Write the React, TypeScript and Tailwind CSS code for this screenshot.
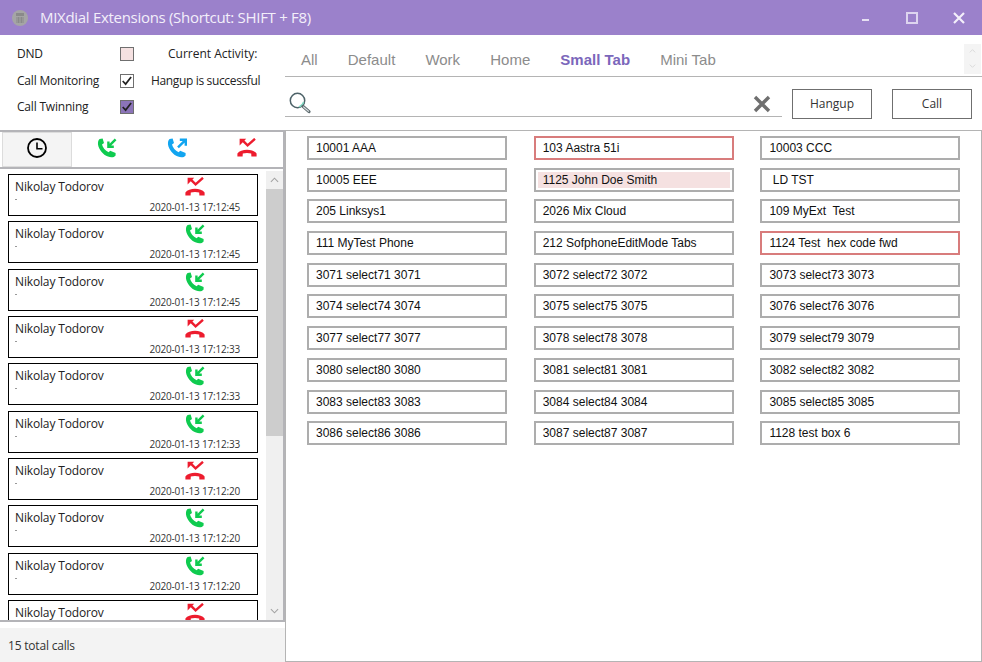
const ui = "font-['Open_Sans',sans-serif]";

const calls = [
  { kind: "missed", time: "2020-01-13 17:12:45" },
  { kind: "in", time: "2020-01-13 17:12:45" },
  { kind: "in", time: "2020-01-13 17:12:45" },
  { kind: "missed", time: "2020-01-13 17:12:33" },
  { kind: "in", time: "2020-01-13 17:12:33" },
  { kind: "in", time: "2020-01-13 17:12:33" },
  { kind: "missed", time: "2020-01-13 17:12:20" },
  { kind: "in", time: "2020-01-13 17:12:20" },
  { kind: "in", time: "2020-01-13 17:12:20" },
  { kind: "missed", time: "2020-01-13 17:12:08" },
];

const extensions = [
  { name: "10001 AAA" },
  { name: "103 Aastra 51i", state: "busy" },
  { name: "10003 CCC" },
  { name: "10005 EEE" },
  { name: "1125 John Doe Smith", state: "ringing" },
  { name: " LD TST" },
  { name: "205 Linksys1" },
  { name: "2026 Mix Cloud" },
  { name: "109 MyExt  Test" },
  { name: "111 MyTest Phone" },
  { name: "212 SofphoneEditMode Tabs" },
  { name: "1124 Test  hex code fwd", state: "busy" },
  { name: "3071 select71 3071" },
  { name: "3072 select72 3072" },
  { name: "3073 select73 3073" },
  { name: "3074 select74 3074" },
  { name: "3075 select75 3075" },
  { name: "3076 select76 3076" },
  { name: "3077 select77 3077" },
  { name: "3078 select78 3078" },
  { name: "3079 select79 3079" },
  { name: "3080 select80 3080" },
  { name: "3081 select81 3081" },
  { name: "3082 select82 3082" },
  { name: "3083 select83 3083" },
  { name: "3084 select84 3084" },
  { name: "3085 select85 3085" },
  { name: "3086 select86 3086" },
  { name: "3087 select87 3087" },
  { name: "1128 test box 6" },
];

const tabs = ["All", "Default", "Work", "Home", "Small Tab", "Mini Tab"];

const IncomingIcon = ({ color = "#0fcb4f", flip = false }: { color?: string; flip?: boolean }) => (
  <svg viewBox="0 0 20 20" className="w-5 h-5">
    <path
      d="M2.6 1 L5.6 0.6 L7 5 L5 6.4 C5.8 9.6 8.2 12.4 11.6 14.2 L13.2 12.8 L18.6 15 L18.6 17.4 C17 19.6 14 19.8 11 18.6 C6 16.6 1.8 11.6 1 6.4 C0.8 4 1.2 2 2.6 1 Z"
      fill={color}
    />
    {flip ? (
      <path d="M11 9.4 L17.6 2.8 M12.8 1.8 H18.8 V7.8" stroke={color} strokeWidth="2.4" fill="none" />
    ) : (
      <path d="M18.6 1.4 L12.6 7.4 M11.4 3.4 V8.8 H16.8" stroke={color} strokeWidth="2.4" fill="none" />
    )}
  </svg>
);

const MissedIcon = () => (
  <svg viewBox="0 0 20 20" className="w-5 h-5">
    <path
      d="M0.4 18.6 L0.4 15.4 C4 10.6 16 10.6 19.6 15.4 L19.6 18.6 L14.4 18.6 L14.2 15.6 C12 14.8 8 14.8 5.8 15.6 L5.6 18.6 Z"
      fill="#ed1c2e"
    />
    <path d="M5.8 2.6 L10.6 7.4 L18 0.8" stroke="#ed1c2e" strokeWidth="2.4" fill="none" />
    <path d="M2.6 0.8 H9.2 L2.6 7.4 Z" fill="#ed1c2e" />
  </svg>
);

const ClockIcon = () => (
  <svg viewBox="0 0 20 20" className="w-5 h-5">
    <circle cx="10" cy="10" r="9" stroke="#000" strokeWidth="1.8" fill="none" />
    <path d="M10 4.5 V10.8 H15.5" stroke="#000" strokeWidth="1.6" fill="none" />
  </svg>
);

const SearchIcon = () => (
  <svg viewBox="0 0 24 24" className="w-6 h-6">
    <circle cx="9.5" cy="9.5" r="7.2" stroke="#4d6268" strokeWidth="1.5" fill="#fff" />
    <path d="M11 15.8 A7 7 0 0 0 15.6 11" stroke="#7fd8c0" strokeWidth="1.4" fill="none" />
    <path d="M15 15.4 L21 20.6" stroke="#5d6a6e" strokeWidth="3.2" strokeLinecap="round" />
    <path d="M15.6 16 L20.6 20.2" stroke="#d6dcdd" strokeWidth="1.2" strokeLinecap="round" />
  </svg>
);

const Check = ({ color }: { color: string }) => (
  <svg viewBox="0 0 14 14" className="w-3 h-3">
    <path d="M2 7 L5.4 10.6 L11.8 2.4" stroke={color} strokeWidth="2" fill="none" />
  </svg>
);

const TitleBar = () => (
  <div className="h-[35px] shrink-0 bg-[#9b81cb] flex items-center text-white">
    <svg viewBox="0 0 16 16" className="w-4 h-4 ml-3">
      <circle cx="8" cy="8" r="8" fill="#a5a5a5" />
      <rect x="4" y="3" width="8" height="3" fill="#8a8a8a" />
      <path d="M4 8h8M4 10h8M4 12h8M6.5 7v6M9.5 7v6" stroke="#8a8a8a" strokeWidth="1" />
    </svg>
    <span className={`${ui} ml-3 text-[15px] text-[#f3effa] tracking-[-0.3px]`}>
      MIXdial Extensions (Shortcut: SHIFT + F8)
    </span>
    <div className="ml-auto flex items-center">
      <div className="w-[7px] h-[2px] bg-[#e6dff3] mr-[37px] mt-[4px]" />
      <div className="w-3 h-3 border-2 border-[#ddd4ef] mr-[35px]" />
      <svg viewBox="0 0 12 12" className="w-3 h-3 mr-[17px]">
        <path d="M1 1 L11 11 M11 1 L1 11" stroke="#f3effa" strokeWidth="2.2" />
      </svg>
    </div>
  </div>
);

const Settings = () => (
  <div className={`${ui} h-[95px] shrink-0 pl-[17px] pt-[6px] text-[12px] tracking-[-0.2px] text-[#222] grid grid-cols-[103px_31px_1fr] auto-rows-[26.5px] items-center content-start`}>
    <span>DND</span>
    <div className="w-[14px] h-[14px] border border-[#6f6f6f] bg-[#f5e1e1]" />
    <span className="pl-[17px] whitespace-nowrap tracking-[0px]">Current Activity:</span>
    <span>Call Monitoring</span>
    <div className="w-[14px] h-[14px] border border-[#6f6f6f] flex items-center justify-center">
      <Check color="#222" />
    </div>
    <span className="whitespace-nowrap tracking-[-0.35px]">Hangup is successful</span>
    <span>Call Twinning</span>
    <div className="w-[14px] h-[14px] border border-[#6f6f6f] bg-[#8b74b8] flex items-center justify-center">
      <Check color="#222" />
    </div>
  </div>
);

const FilterBar = () => (
  <div className="h-[39px] shrink-0 border-y-2 border-[#b4b4b8] flex items-center pl-[2px]">
    <div className="w-[70px] h-[35px] pb-[3px] bg-[#f4f4f4] border border-[#dcdcdc] flex items-center justify-center">
      <ClockIcon />
    </div>
    <div className="w-[70px] pb-[3px] flex justify-center"><IncomingIcon /></div>
    <div className="w-[70px] pb-[3px] flex justify-center"><IncomingIcon color="#12a5f0" flip /></div>
    <div className="w-[70px] pb-[3px] flex justify-center"><MissedIcon /></div>
  </div>
);

const CallCard = ({ kind, time }: { kind: string; time: string }) => (
  <div className="h-[42px] shrink-0 border border-black flex justify-between pl-[6px] pr-[17px]">
    <div className={`${ui} text-[12px] tracking-[-0.15px] text-[#222] leading-[16px] pt-[4px]`}>
      <div>Nikolay Todorov</div>
      <div className="w-[2px] h-[1px] bg-[#999] mt-[4px]" />
    </div>
    <div className="flex flex-col items-center pt-[2px]">
      <div className="h-[24px]">{kind === "in" ? <IncomingIcon /> : <MissedIcon />}</div>
      <div className={`${ui} text-[10px] tracking-[-0.2px] leading-[13px] text-[#333] whitespace-nowrap`}>{time}</div>
    </div>
  </div>
);

const Scrollbar = () => (
  <div className="w-[17px] ml-[8px] bg-[#f0f0f0] flex flex-col shrink-0 self-stretch">
    <div className="h-[18px] flex items-center justify-center">
      <svg viewBox="0 0 10 6" className="w-[9px] h-[6px]"><path d="M1 5 L5 1 L9 5" stroke="#a3a3a3" strokeWidth="1.2" fill="none" /></svg>
    </div>
    <div className="h-[247px] bg-[#cdcdcd]" />
    <div className="mt-auto h-[18px] flex items-center justify-center">
      <svg viewBox="0 0 10 6" className="w-[9px] h-[6px]"><path d="M1 1 L5 5 L9 1" stroke="#a3a3a3" strokeWidth="1.2" fill="none" /></svg>
    </div>
  </div>
);

const LeftPanel = () => (
  <div className="w-[285px] shrink-0 flex flex-col">
    <Settings />
    <div className="flex-1 min-h-0 flex flex-col border-r-2 border-b-2 border-[#b4b4b8]">
      <FilterBar />
      <div className="flex-1 min-h-0 flex pl-[8px] pt-[2px] overflow-hidden">
        <div className="w-[250px] shrink-0 flex flex-col gap-[5.33px] pt-[3px] overflow-hidden">
          {calls.map((call, i) => (
            <CallCard key={i} kind={call.kind} time={call.time} />
          ))}
        </div>
        <Scrollbar />
      </div>
    </div>
    <div className={`${ui} mt-[6px] h-[34px] shrink-0 bg-[#f3f3f3] pl-[8px] pt-[2px] flex items-center text-[12px] tracking-[-0.2px] text-[#333]`}>
      15 total calls
    </div>
  </div>
);

const TabStrip = () => (
  <div className="h-[42px] shrink-0 border-b border-[#b4b4b4] flex items-center pl-[16px] font-['Liberation_Sans',sans-serif] text-[15px] text-[#8c8c8c]">
    <div className="flex gap-[30.1px] pt-[9px]">
      {tabs.map((t) => (
        <span key={t} className={t === "Small Tab" ? "font-bold text-[#7b67bb]" : ""}>{t}</span>
      ))}
    </div>
    <div className="ml-auto mr-[1px] mt-[6px] w-[17px] flex flex-col bg-[#f4f4f4]">
      <div className="h-[15px] flex items-center justify-center">
        <svg viewBox="0 0 10 6" className="w-[7px] h-[4px]"><path d="M1 5 L5 1 L9 5" stroke="#d4d4d4" strokeWidth="1.2" fill="none" /></svg>
      </div>
      <div className="h-[15px] flex items-center justify-center">
        <svg viewBox="0 0 10 6" className="w-[7px] h-[4px]"><path d="M1 1 L5 5 L9 1" stroke="#d4d4d4" strokeWidth="1.2" fill="none" /></svg>
      </div>
    </div>
  </div>
);

const SearchRow = () => (
  <div className="h-[53px] shrink-0 flex items-start">
    <div className="w-[497px] h-[40px] border-b border-[#b4b4b4] flex items-end justify-between pb-[1px] pl-[3px] pr-[11px]">
      <SearchIcon />
      <svg viewBox="0 0 18 18" className="w-[18px] h-[18px] mb-[2px]">
        <path d="M2 2 L16 16 M16 2 L2 16" stroke="#6f6f6f" strokeWidth="3.4" />
      </svg>
    </div>
    <div className={`${ui} flex gap-[20px] ml-[10px] mt-[12px] text-[12px] text-[#333]`}>
      <button className="w-[80px] h-[30px] border border-[#6f6f6f]">Hangup</button>
      <button className="w-[80px] h-[30px] border border-[#6f6f6f]">Call</button>
    </div>
  </div>
);

const ExtensionBox = ({ name, state }: { name: string; state?: string }) => (
  <div
    className={`h-[24px] border-2 p-[2px] font-['Liberation_Sans',sans-serif] text-[12px] text-[#111] ${
      state === "busy" ? "border-[#d87c7c]" : "border-[#adadad]"
    }`}
  >
    <div className={`h-full flex items-center pl-[5px] whitespace-pre ${state === "ringing" ? "bg-[#f5e1e1]" : ""}`}>
      {name}
    </div>
  </div>
);

const RightPanel = () => (
  <div className="flex-1 min-w-0 flex flex-col">
    <TabStrip />
    <SearchRow />
    <div className="flex-1 min-h-0 border border-[#b4b4b4] pt-[5px] pl-[21px] pr-[21px]">
      <div className="grid grid-cols-[200px_200px_200px] gap-x-[26.7px] gap-y-[7.7px]">
        {extensions.map((ext) => (
          <ExtensionBox key={ext.name} name={ext.name} state={ext.state} />
        ))}
      </div>
    </div>
  </div>
);

export default function App() {
  return (
    <div className="w-[982px] h-[662px] bg-white flex flex-col overflow-hidden">
      <TitleBar />
      <div className="flex-1 min-h-0 flex">
        <LeftPanel />
        <RightPanel />
      </div>
    </div>
  );
}
